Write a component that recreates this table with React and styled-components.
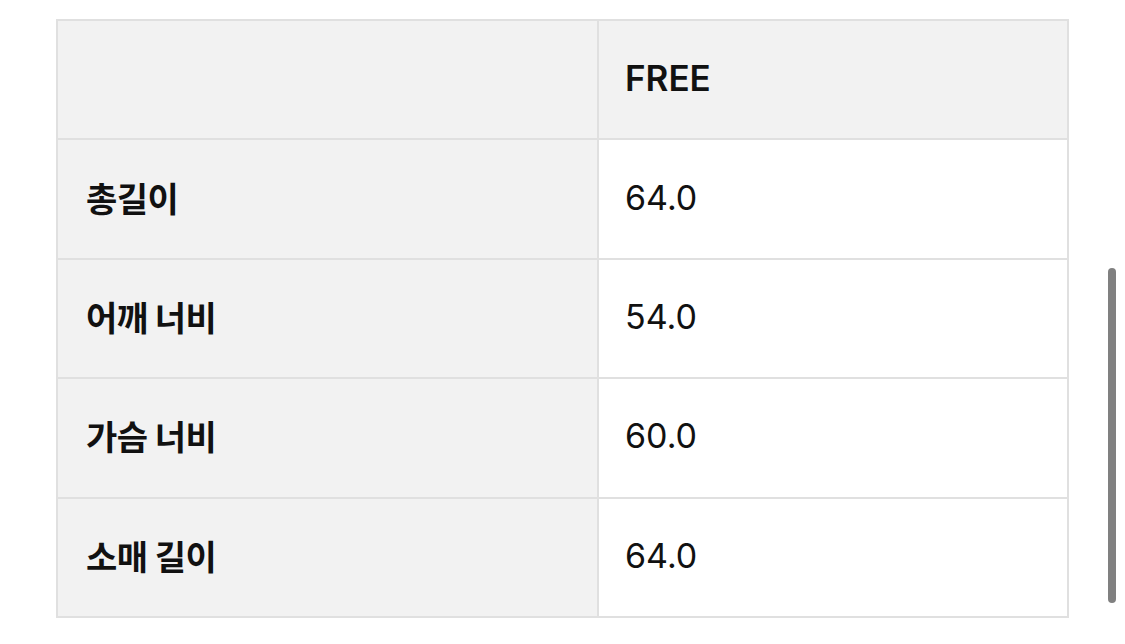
import React from 'react';
import styled, { createGlobalStyle } from 'styled-components';

const GlobalStyle = createGlobalStyle`
  html, body {
    margin: 0;
    padding: 0;
    background: #ffffff;
    overflow: hidden;
  }
  body {
    font-family: Inter, "Noto Sans CJK KR", sans-serif;
    color: #111111;
  }
`;

const Page = styled.div`
  position: relative;
  width: 1125px;
  height: 644px;
  padding: 19px 0 0 56px;
  box-sizing: border-box;
`;

const Table = styled.table`
  width: 1013px;
  border-collapse: collapse;
  table-layout: fixed;
`;

const Row = styled.tr`
  height: 119.4px;
`;

const Cell = styled.td`
  border: 2px solid #e0e0e0;
  padding: 0 0 4px ${(p) => (p.$label ? '28px' : '26px')};
  background: ${(p) => (p.$shaded ? '#f2f2f2' : '#ffffff')};
  font-size: 34px;
  font-weight: ${(p) => (p.$label ? 700 : 400)};
  font-family: ${(p) =>
    p.$label ? '"Noto Sans CJK KR", sans-serif' : 'Inter, "Noto Sans CJK KR", sans-serif'};
  letter-spacing: ${(p) => (p.$label ? '-0.5px' : '0')};
  vertical-align: middle;
  white-space: nowrap;
`;

const HeadCell = styled(Cell).attrs({ as: 'th' })`
  text-align: left;
  background: #f2f2f2;
  font-weight: 600;
  font-size: 35px;
`;

const Scrollbar = styled.div`
  position: absolute;
  left: 1108px;
  top: 268px;
  width: 8px;
  height: 335px;
  border-radius: 4px;
  background: #808080;
`;

const rows = [
  ['총길이', '64.0'],
  ['어깨 너비', '54.0'],
  ['가슴 너비', '60.0'],
  ['소매 길이', '64.0'],
];

export default function App() {
  return (
    <>
      <GlobalStyle />
      <Page>
        <Table>
          <colgroup>
            <col style={{ width: 541 }} />
            <col />
          </colgroup>
          <thead>
            <Row>
              <HeadCell />
              <HeadCell>FREE</HeadCell>
            </Row>
          </thead>
          <tbody>
            {rows.map(([label, value]) => (
              <Row key={label}>
                <Cell $shaded $label>{label}</Cell>
                <Cell>{value}</Cell>
              </Row>
            ))}
          </tbody>
        </Table>
        <Scrollbar />
      </Page>
    </>
  );
}
